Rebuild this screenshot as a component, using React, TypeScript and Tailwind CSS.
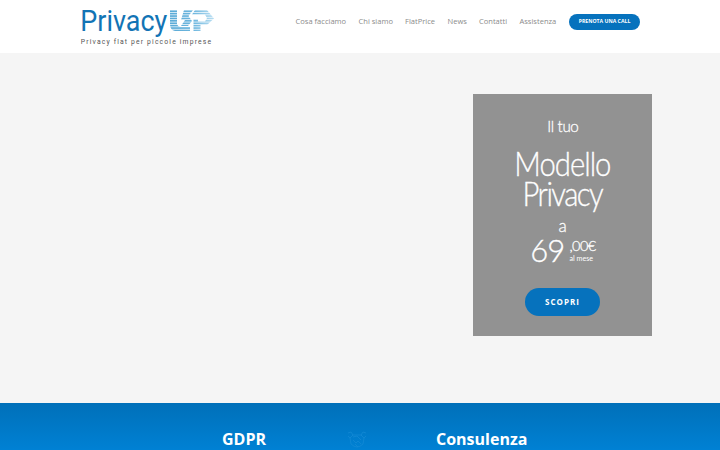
import React from "react";

const links = [
  { label: "Cosa facciamo", box: "w-[63px]" },
  { label: "Chi siamo", box: "w-[46.5px]" },
  { label: "FlatPrice", box: "w-[42.5px]" },
  { label: "News", box: "w-[31.5px]" },
  { label: "Contatti", box: "w-[40.5px]" },
  { label: "Assistenza", box: "w-[49.5px]" },
];

const stripes = [10.8, 13.2, 15.6, 18, 20.4, 22.8, 25.2, 27.6, 30];

function Logo() {
  return (
    <svg className="block h-[52px] w-[140px]" viewBox="78 0 140 52" role="img" aria-label="PrivacyUP">
      <defs>
        <linearGradient id="fade" x1="169" x2="213" y1="0" y2="0" gradientUnits="userSpaceOnUse">
          <stop offset="0" stopColor="#5aaad6" />
          <stop offset="0.55" stopColor="#6db6de" />
          <stop offset="1" stopColor="#b5dcf1" />
        </linearGradient>
        <clipPath id="up">
          <path d="M170 10H177V24Q178 27 181 27H190V31H175Q170 30 170 24Z" />
          <path d="M184 10H193L188.5 16L192 21L188 26H181L185 20H181Z" />
          <path fillRule="evenodd" clipRule="evenodd" d="M195 10H207L214 18.5L207 25H200.5V31H193.5V19H198V21.5H205L207 18L205 14.5H192Z" />
        </clipPath>
      </defs>
      <text x="80.3" y="31.2" fontFamily="Roboto, sans-serif" fontSize="30" textLength="87" lengthAdjust="spacingAndGlyphs" fill="#1274b5">Privacy</text>
      <g clipPath="url(#up)">
        {stripes.map((y) => (
          <rect key={y} x="168" y={y - 0.4} width="47" height="1.7" fill="url(#fade)" />
        ))}
      </g>
      <text className="[font-variant-ligatures:none]" x="80.8" y="44.3" fontFamily="Roboto, sans-serif" fontSize="6.8" textLength="130.3" fill="#555">Privacy flat per piccole imprese</text>
    </svg>
  );
}

function Handshake() {
  return (
    <svg className="h-[18px] w-[20px]" viewBox="0 0 20 18" fill="none" stroke="#168bd5" strokeWidth="0.7">
      <path d="M1 2L4 1L6 4L3 7L1 5M19 2L16 1L14 4L17 7L19 5M5 4H15M3 7L4 13Q10 19 16 13L17 7M6 6L10 5L14 9M6 9L9 12L11 10L14 13M8 13L11 16" />
    </svg>
  );
}

export default function App() {
  return (
    <div className="flex h-[450px] w-[720px] flex-col overflow-hidden bg-[#f5f5f5] font-['Open_Sans',sans-serif]">
      <header className="flex h-[52.5px] shrink-0 items-start bg-white pl-[78px]">
        <Logo />
        <nav className="ml-[77.5px] flex h-[43px] items-center text-[7.55px] text-[#8b8b8b]">
          {links.map((l) => (
            <a key={l.label} className={`${l.box} shrink-0 pt-px whitespace-nowrap`}>{l.label}</a>
          ))}
          <a className="flex h-4 w-[71px] shrink-0 items-center justify-center rounded-full bg-[#0672bd] pt-px text-[5.2px] font-bold whitespace-nowrap text-white">PRENOTA UNA CALL</a>
        </nav>
      </header>

      <main className="flex h-[350px] shrink-0 justify-end pt-[41.5px] pr-[68px]">
        <section className="flex h-[242px] w-[179px] flex-col items-center bg-[#929292] pt-[21px] font-['Lato',sans-serif] font-light text-white [-webkit-text-stroke:0.3px_white]">
          <p className="scale-x-92 text-[16.5px] leading-[22px] tracking-[-0.4px]">Il tuo</p>
          <h1 className="mt-[12px] scale-x-90 text-center text-[32.5px] leading-[30px] tracking-[-1.1px]">
            <span className="block">Modello</span>
            <span className="block tracking-[-1.7px]">Privacy</span>
          </h1>
          <p className="mt-[6px] text-[17px] leading-[22px]">a</p>
          <div className="-mt-px flex h-[29px] items-start gap-[5px] pl-px">
            <span className="text-[31px] leading-[29px] tracking-[-0.9px]">69</span>
            <div className="flex flex-col pt-px">
              <span className="text-[14.5px] leading-[18px] tracking-[-0.5px]">,00€</span>
              <span className="text-[7.2px] leading-[8px] font-normal [-webkit-text-stroke:0]">al mese</span>
            </div>
          </div>
          <a className="mt-[22.5px] flex h-7 w-[75px] items-center justify-center rounded-full bg-[#0672bd] font-['Open_Sans',sans-serif] text-[8px] font-bold tracking-[1px] [-webkit-text-stroke:0]">SCOPRI</a>
        </section>
      </main>

      <section className="flex h-[47.5px] shrink-0 items-start bg-linear-to-b from-[#0070b9] to-[#0081d4] pl-[222px] text-white">
        <h2 className="mt-[25px] w-[125px] text-[16px] leading-[22px] font-bold">GDPR</h2>
        <div className="mt-[28px] w-[89px]"><Handshake /></div>
        <h2 className="mt-[25px] text-[16px] leading-[22px] font-bold">Consulenza</h2>
      </section>
    </div>
  );
}
